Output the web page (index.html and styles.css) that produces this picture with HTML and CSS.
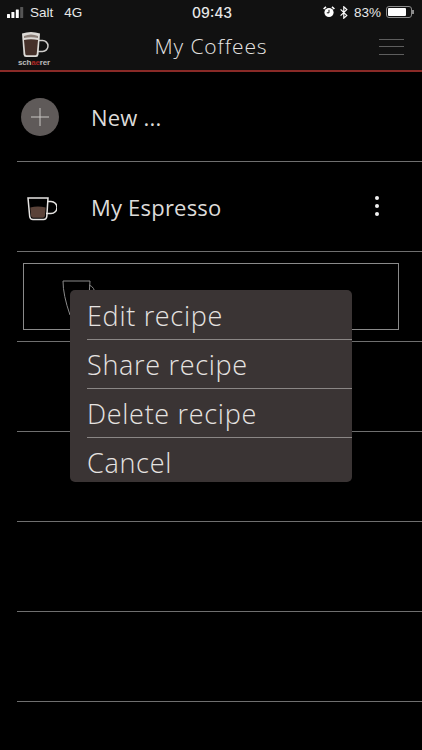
FILE: index.html
```html
<!DOCTYPE html>
<html lang="en">
<head>
    <meta charset="UTF-8">
    <meta name="viewport" content="width=device-width, initial-scale=1.0">
    <title>My Coffees</title>
    <link rel="stylesheet" href="styles.css">
</head>
<body>
    <div class="top">
        <div class="status">
            <div class="status-left">
                <svg class="signal" width="17" height="11" viewBox="0 0 17 11">
                    <rect x="0" y="7" width="3" height="4" rx="0.5" fill="#fff"/>
                    <rect x="4.4" y="5" width="3" height="6" rx="0.5" fill="#fff"/>
                    <rect x="8.8" y="2.5" width="3" height="8.5" rx="0.5" fill="#fff"/>
                    <rect x="13.2" y="0" width="3" height="11" rx="0.5" fill="#555"/>
                </svg>
                <span>Salt</span>
                <span class="network">4G</span>
            </div>
            <div class="time">09:43</div>
            <div class="status-right">
                <svg width="12" height="12" viewBox="0 0 12 12">
                    <circle cx="6" cy="6.5" r="4.6" fill="#fff"/>
                    <path d="M6 3.8V6.8H3.8" fill="none" stroke="#111" stroke-width="1"/>
                    <path d="M0.6 3L3 0.8M11.4 3L9 0.8" stroke="#fff" stroke-width="1.6"/>
                </svg>
                <svg class="bt" width="8" height="13" viewBox="0 0 8 13">
                    <path d="M0.6 3.4L6.8 9.4L3.8 12.2V0.8L6.8 3.6L0.6 9.6" fill="none" stroke="#fff" stroke-width="1.2"/>
                </svg>
                <span class="pct">83%</span>
                <div class="battery"><div class="battery-level"></div></div>
                <div class="battery-tip"></div>
            </div>
        </div>
        <div class="header">
            <div class="logo">
                <svg width="30" height="29" viewBox="0 0 30 29">
                    <path d="M20 10.500h3.500a5.500 5.500 0 0 1 0 11h-5" fill="none" stroke="#cfcdca" stroke-width="1.500"/>
                    <path d="M3 3.500q9-3 18 0l-1.500 21q-.3 2.500-2.500 2.500h-10q-2.200 0-2.500-2.500z" fill="#dcdad6"/>
                    <path d="M5 10q7-1.500 14 0l-1.300 14q-.2 1.300-1.500 1.300h-8.400q-1.300 0-1.500-1.300z" fill="#453029"/>
                    <path d="M5 6q7-3 14 0v2q-7-1.500-14 0z" fill="#8b7f78"/>
                </svg>
                <div class="logo-name">sch<span class="logo-red">ae</span>rer</div>
            </div>
            <div class="title">My Coffees</div>
            <div class="burger">
                <div class="burger-line"></div>
                <div class="burger-line"></div>
                <div class="burger-line"></div>
            </div>
        </div>
    </div>

    <div class="list">
        <div class="row">
            <div class="plus">
                <svg width="20" height="20" viewBox="0 0 20 20">
                    <path d="M10 1V19M1 10H19" stroke="#c9c6c4" stroke-width="1"/>
                </svg>
            </div>
            <div class="row-label">New ...</div>
        </div>
        <div class="row">
            <svg class="cup" width="30" height="24" viewBox="0 0 30 24">
                <path d="M20.500 4.500h3.500a6 6 0 0 1 0 12h-5" fill="none" stroke="#e6e4e2" stroke-width="1.500"/>
                <path d="M1 1h20l-1.200 18.500q-.3 3-3.300 3h-10.500q-3 0-3.300-3z" fill="none" stroke="#e6e4e2" stroke-width="1.500"/>
                <path d="M3.300 10.500q7.500-2 15.400 0l-.8 8.500q-.2 1.800-2 1.800h-9.800q-1.800 0-2-1.800z" fill="#5a4238"/>
            </svg>
            <div class="row-label">My Espresso</div>
            <div class="dots">
                <div class="dot"></div>
                <div class="dot"></div>
                <div class="dot"></div>
            </div>
        </div>
        <div class="row row-selected">
            <div class="selected-box">
                <svg width="36" height="50" viewBox="0 0 36 50">
                    <path d="M1 1h27l-3 46M1 1q0 14 7 34" fill="none" stroke="#8a8a8a" stroke-width="1"/>
                    <path d="M27 5q6 2 6 10" fill="none" stroke="#8a8a8a" stroke-width="1"/>
                </svg>
            </div>
        </div>
        <div class="row"></div>
        <div class="row"></div>
        <div class="row"></div>
        <div class="row"></div>
    </div>

    <div class="menu">
        <div class="menu-item">Edit recipe</div>
        <div class="menu-item">Share recipe</div>
        <div class="menu-item">Delete recipe</div>
        <div class="menu-item menu-last">Cancel</div>
    </div>
</body>
</html>
```

FILE: styles.css
```css
html, body {
    margin: 0;
    height: 100%;
}
body {
    position: relative;
    width: 422px;
    height: 750px;
    overflow: hidden;
    background: #000;
    font-family: "Open Sans", Roboto, sans-serif;
    color: #e4e2e0;
}
.top {
    background: #111111;
    border-bottom: 2px solid #8a2a27;
    box-sizing: border-box;
    height: 72px;
}
.status {
    display: flex;
    justify-content: space-between;
    align-items: center;
    height: 24px;
    padding: 0 8px 0 7px;
    font-family: "Liberation Sans", Arial, sans-serif;
    font-size: 13.5px;
    color: #e8e8e8;
    position: relative;
}
.status-left {
    display: flex;
    align-items: center;
    gap: 6px;
}
.network {
    margin-left: 5px;
}
.time {
    font-family: Inter, "Liberation Sans", sans-serif;
    font-size: 14px;
    font-weight: 500;
    margin-left: 19px;
}
.status-right {
    display: flex;
    align-items: center;
    gap: 5px;
}
.pct {
    margin-left: 1px;
}
.battery {
    width: 26px;
    height: 12px;
    border: 1px solid #8c8c8c;
    border-radius: 3px;
    padding: 1px;
    box-sizing: border-box;
}
.battery-level {
    width: 83%;
    height: 100%;
    background: #fff;
    border-radius: 1px;
}
.battery-tip {
    width: 2px;
    height: 4px;
    background: #8c8c8c;
    margin-left: -5px;
}
.header {
    display: flex;
    align-items: center;
    justify-content: space-between;
    height: 46px;
    padding: 0 18px;
}
.logo {
    width: 32px;
    display: flex;
    flex-direction: column;
    align-items: center;
    margin-top: 2px;
}
.logo svg {
    display: block;
}
.logo-name {
    font-family: "Liberation Sans", Arial, sans-serif;
    font-size: 8px;
    line-height: 7px;
    font-weight: bold;
    letter-spacing: -0.2px;
    color: #bdbdbd;
}
.logo-red {
    color: #a82622;
}
.title {
    font-size: 21px;
    letter-spacing: 0.9px;
    color: #e6e4e2;
    font-weight: 300;
    margin-left: -7px;
    margin-top: -3px;
}
.burger {
    width: 25px;
    display: flex;
    flex-direction: column;
    gap: 6.500px;
    margin-top: -1px;
}
.burger-line {
    height: 1px;
    background: #5e5e5e;
}
.list {
    padding-left: 17px;
}
.row {
    height: 90px;
    border-bottom: 1px solid #6f6f6f;
    box-sizing: border-box;
    display: flex;
    align-items: center;
}
.row-label {
    font-size: 22px;
    letter-spacing: 0.2px;
    color: #dddbd9;
}
.plus {
    width: 38px;
    height: 38px;
    border-radius: 50%;
    background: #5f5a59;
    display: flex;
    align-items: center;
    justify-content: center;
    margin: 0 32px 0 4px;
}
.cup {
    margin: 4px 34px 0 10px;
}
.dots {
    display: flex;
    flex-direction: column;
    gap: 4px;
    margin-left: auto;
    margin-right: 43px;
    margin-top: -1px;
}
.dot {
    width: 4px;
    height: 4px;
    border-radius: 50%;
    background: #f0f0f0;
}
.row-selected {
    align-items: flex-start;
}
.selected-box {
    box-sizing: border-box;
    width: 376px;
    height: 67px;
    margin: 11px 0 0 6px;
    border: 1px solid #8a8a8a;
    padding: 16px 0 0 38px;
    overflow: hidden;
}
.menu {
    position: absolute;
    left: 70px;
    top: 290px;
    width: 282px;
    height: 192px;
    padding-top: 1px;
    box-sizing: border-box;
    overflow: hidden;
    background: #3a3434;
    border-radius: 5px;
}
.menu-item {
    height: 49px;
    box-sizing: border-box;
    margin-left: 17px;
    border-bottom: 1px solid #8a8685;
    font-size: 27px;
    line-height: 50px;
    letter-spacing: 0.7px;
    color: #e6e3e1;
    font-weight: 300;
    white-space: nowrap;
}
.menu-last {
    border-bottom: 0;
}
```
